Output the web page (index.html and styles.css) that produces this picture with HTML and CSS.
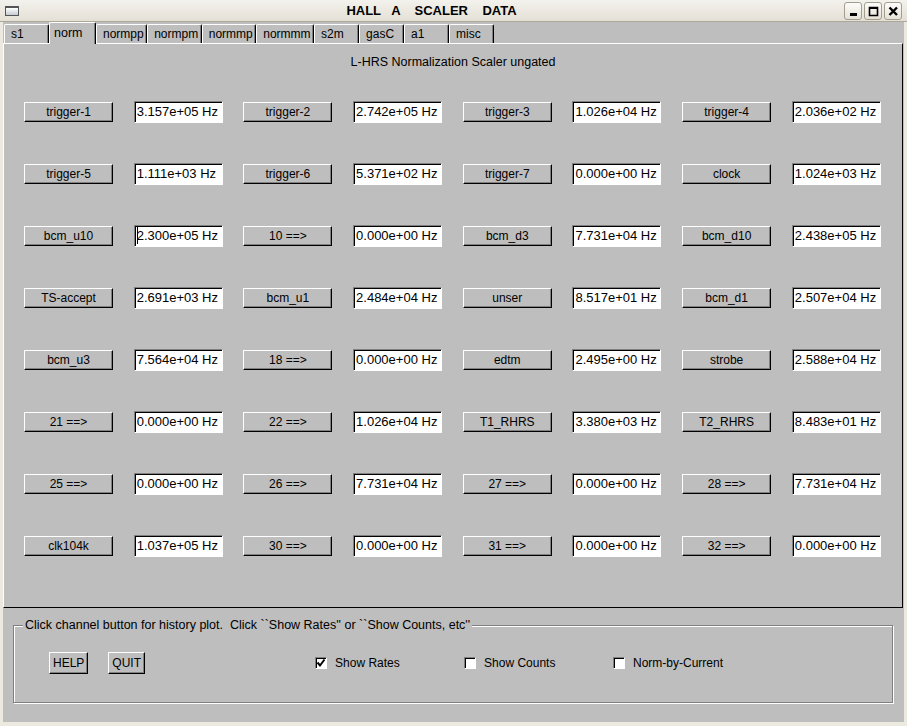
FILE: index.html
```html
<!DOCTYPE html>
<html lang="en">
<head>
    <meta charset="UTF-8">
    <title>HALL A SCALER DATA</title>
    <link rel="stylesheet" href="styles.css">
</head>
<body>
<div class="window">
    <div class="titlebar">
        <span class="win-icon"></span>
        <span class="title">HALL   A    SCALER    DATA</span>
        <span class="wm-buttons">
            <span class="wm-btn"><svg width="16" height="16" viewBox="0 0 16 16"><rect x="5" y="10" width="7" height="3" fill="#000"/></svg></span>
            <span class="wm-btn"><svg width="16" height="16" viewBox="0 0 16 16"><path d="M4.5 4.5h8v8h-8z" fill="none" stroke="#000" stroke-width="1.6"/><rect x="4" y="4" width="9" height="2" fill="#000"/></svg></span>
            <span class="wm-btn"><svg width="16" height="16" viewBox="0 0 16 16"><path d="M4.5 4.5l7.5 7.5M12 4.5l-7.5 7.5" stroke="#000" stroke-width="2.4"/></svg></span>
        </span>
    </div>

    <div class="client">
        <div class="tabs">
            <span class="tab">s1</span>
            <span class="tab active">norm</span>
            <span class="tab">normpp</span>
            <span class="tab">normpm</span>
            <span class="tab">normmp</span>
            <span class="tab">normmm</span>
            <span class="tab">s2m</span>
            <span class="tab">gasC</span>
            <span class="tab">a1</span>
            <span class="tab">misc</span>
        </div>

        <div class="page">
            <div class="page-title">L-HRS Normalization Scaler ungated</div>
            <div class="channels">
                <button class="chan">trigger-1</button><div class="entry">3.157e+05 Hz</div>
                <button class="chan">trigger-2</button><div class="entry">2.742e+05 Hz</div>
                <button class="chan">trigger-3</button><div class="entry">1.026e+04 Hz</div>
                <button class="chan">trigger-4</button><div class="entry">2.036e+02 Hz</div>

                <button class="chan">trigger-5</button><div class="entry">1.111e+03 Hz</div>
                <button class="chan">trigger-6</button><div class="entry">5.371e+02 Hz</div>
                <button class="chan">trigger-7</button><div class="entry">0.000e+00 Hz</div>
                <button class="chan">clock</button><div class="entry">1.024e+03 Hz</div>

                <button class="chan">bcm_u10</button><div class="entry focus"><span class="caret"></span>2.300e+05 Hz</div>
                <button class="chan">10 ==&gt;</button><div class="entry">0.000e+00 Hz</div>
                <button class="chan">bcm_d3</button><div class="entry">7.731e+04 Hz</div>
                <button class="chan">bcm_d10</button><div class="entry">2.438e+05 Hz</div>

                <button class="chan">TS-accept</button><div class="entry">2.691e+03 Hz</div>
                <button class="chan">bcm_u1</button><div class="entry">2.484e+04 Hz</div>
                <button class="chan">unser</button><div class="entry">8.517e+01 Hz</div>
                <button class="chan">bcm_d1</button><div class="entry">2.507e+04 Hz</div>

                <button class="chan">bcm_u3</button><div class="entry">7.564e+04 Hz</div>
                <button class="chan">18 ==&gt;</button><div class="entry">0.000e+00 Hz</div>
                <button class="chan">edtm</button><div class="entry">2.495e+00 Hz</div>
                <button class="chan">strobe</button><div class="entry">2.588e+04 Hz</div>

                <button class="chan">21 ==&gt;</button><div class="entry">0.000e+00 Hz</div>
                <button class="chan">22 ==&gt;</button><div class="entry">1.026e+04 Hz</div>
                <button class="chan">T1_RHRS</button><div class="entry">3.380e+03 Hz</div>
                <button class="chan">T2_RHRS</button><div class="entry">8.483e+01 Hz</div>

                <button class="chan">25 ==&gt;</button><div class="entry">0.000e+00 Hz</div>
                <button class="chan">26 ==&gt;</button><div class="entry">7.731e+04 Hz</div>
                <button class="chan">27 ==&gt;</button><div class="entry">0.000e+00 Hz</div>
                <button class="chan">28 ==&gt;</button><div class="entry">7.731e+04 Hz</div>

                <button class="chan">clk104k</button><div class="entry">1.037e+05 Hz</div>
                <button class="chan">30 ==&gt;</button><div class="entry">0.000e+00 Hz</div>
                <button class="chan">31 ==&gt;</button><div class="entry">0.000e+00 Hz</div>
                <button class="chan">32 ==&gt;</button><div class="entry">0.000e+00 Hz</div>
            </div>
        </div>

        <div class="footer">
            <fieldset class="group">
                <legend>Click channel button for history plot.  Click ``Show Rates'' or ``Show Counts, etc''</legend>
                <div class="controls">
                    <button class="btn">HELP</button>
                    <button class="btn quit">QUIT</button>
                    <div class="checks">
                        <label class="check"><span class="box"><svg width="10" height="10" viewBox="0 0 10 10"><path d="M1.5 4.5l2.5 3 4.5-6" fill="none" stroke="#000" stroke-width="2"/></svg></span>Show Rates</label>
                        <label class="check"><span class="box"></span>Show Counts</label>
                        <label class="check"><span class="box"></span>Norm-by-Current</label>
                    </div>
                </div>
            </fieldset>
        </div>
    </div>
</div>
</body>
</html>
```

FILE: styles.css
```css
body {
    margin: 0;
    background-color: #ece9e0;
    font-family: "Liberation Sans", Arial, sans-serif;
    font-size: 12px;
    color: #000;
}

.window {
    width: 907px;
    height: 726px;
    display: flex;
    flex-direction: column;
}

/* window manager title bar */
.titlebar {
    height: 21px;
    border-bottom: 1px solid #aca899;
    background: linear-gradient(#f4f2ed, #e4e0d6);
    display: flex;
    align-items: center;
}

.win-icon {
    width: 12px;
    height: 7px;
    margin-left: 5px;
    border: 1px solid #555;
    border-top-width: 2px;
    background: linear-gradient(#fff, #c5cad3);
}

.title {
    flex: 1;
    text-align: center;
    font-weight: bold;
    font-size: 13px;
    white-space: pre;
}

.wm-buttons {
    display: flex;
    gap: 2px;
    margin-right: 5px;
}

.wm-btn {
    width: 16px;
    height: 16px;
    border: 1px solid #a39d8f;
    border-radius: 3px;
    background: linear-gradient(#fdfcfa, #e6e2d8);
    display: flex;
}

/* Tk client area */
.client {
    flex: 1;
    margin: 0 3px 4px;
    background-color: #bebebe;
    display: flex;
    flex-direction: column;
}

.tabs {
    height: 21px;
    display: flex;
    align-items: flex-end;
    padding-left: 1px;
}

.tab {
    height: 19px;
    min-width: 45px;
    box-sizing: border-box;
    padding: 0 2.5px 0 6px;
    font-size: 12px;
    line-height: 18px;
    border: 1px solid;
    border-bottom: 0;
    border-color: #fff #000 #fff #fff;
    border-radius: 2px 2px 0 0;
    box-shadow: inset -1px 0 #808080;
}

.tab.active {
    height: 22px;
    min-width: 47px;
    margin-bottom: -1px;
    padding-top: 1px;
    padding-left: 4px;
    position: relative;
    z-index: 1;
    font-size: 12.5px;
    background-color: #bebebe;
}

.page {
    height: 565px;
    box-sizing: border-box;
    margin-right: 1px;
    border: 1px solid;
    border-color: #fff #000 #000 #fff;
    padding: 11px 0 0 20px;
}

.page-title {
    text-align: center;
    font-size: 12.5px;
    line-height: 15px;
    margin-bottom: 31px;
    padding-right: 20px;
}

.channels {
    display: grid;
    grid-template-columns: repeat(8, 89px);
    column-gap: 20.7px;
    row-gap: 40px;
    align-items: center;
}

.chan,
.btn {
    font-family: "Liberation Sans", Arial, sans-serif;
    font-size: 12px;
    color: #000;
    background-color: #bebebe;
    border: 1px solid;
    border-color: #fff #000 #000 #fff;
    box-shadow: inset -1px -1px #808080;
    padding: 0;
}

.chan {
    height: 20px;
}

.entry {
    height: 22px;
    box-sizing: border-box;
    background-color: #fff;
    border: 1px solid;
    border-color: #808080 #fff #fff #808080;
    box-shadow: inset 1px 1px #000;
    padding-left: 2px;
    font-size: 13px;
    line-height: 20px;
    white-space: nowrap;
}

.caret {
    display: inline-block;
    width: 1px;
    height: 17px;
    margin-right: -1px;
    vertical-align: -4px;
    background-color: #000;
}

/* bottom control frame */
.footer {
    flex: 1;
}

.group {
    margin: 10px 11px 0 10px;
    padding: 0;
    border: 1px solid #808080;
    box-shadow: inset 1px 1px #fff, 1px 1px #fff;
}

.group legend {
    margin-left: 9px;
    padding: 0 2px;
    font-size: 12.5px;
    line-height: 15px;
    white-space: pre;
    background-color: #bebebe;
}

.controls {
    display: flex;
    align-items: center;
    padding: 19px 0 28px 35px;
}

.btn {
    height: 22px;
    padding: 0 3px;
}

.quit {
    margin-left: 20px;
}

.checks {
    display: flex;
    margin-left: 170px;
}

.check {
    width: 149px;
    display: flex;
    align-items: center;
}

.box {
    width: 12px;
    height: 12px;
    box-sizing: border-box;
    margin-right: 8px;
    border: 1px solid;
    border-color: #808080 #fff #fff #808080;
    box-shadow: inset 1px 1px #000;
    background-color: #fff;
    display: flex;
    align-items: center;
    justify-content: center;
}
```
